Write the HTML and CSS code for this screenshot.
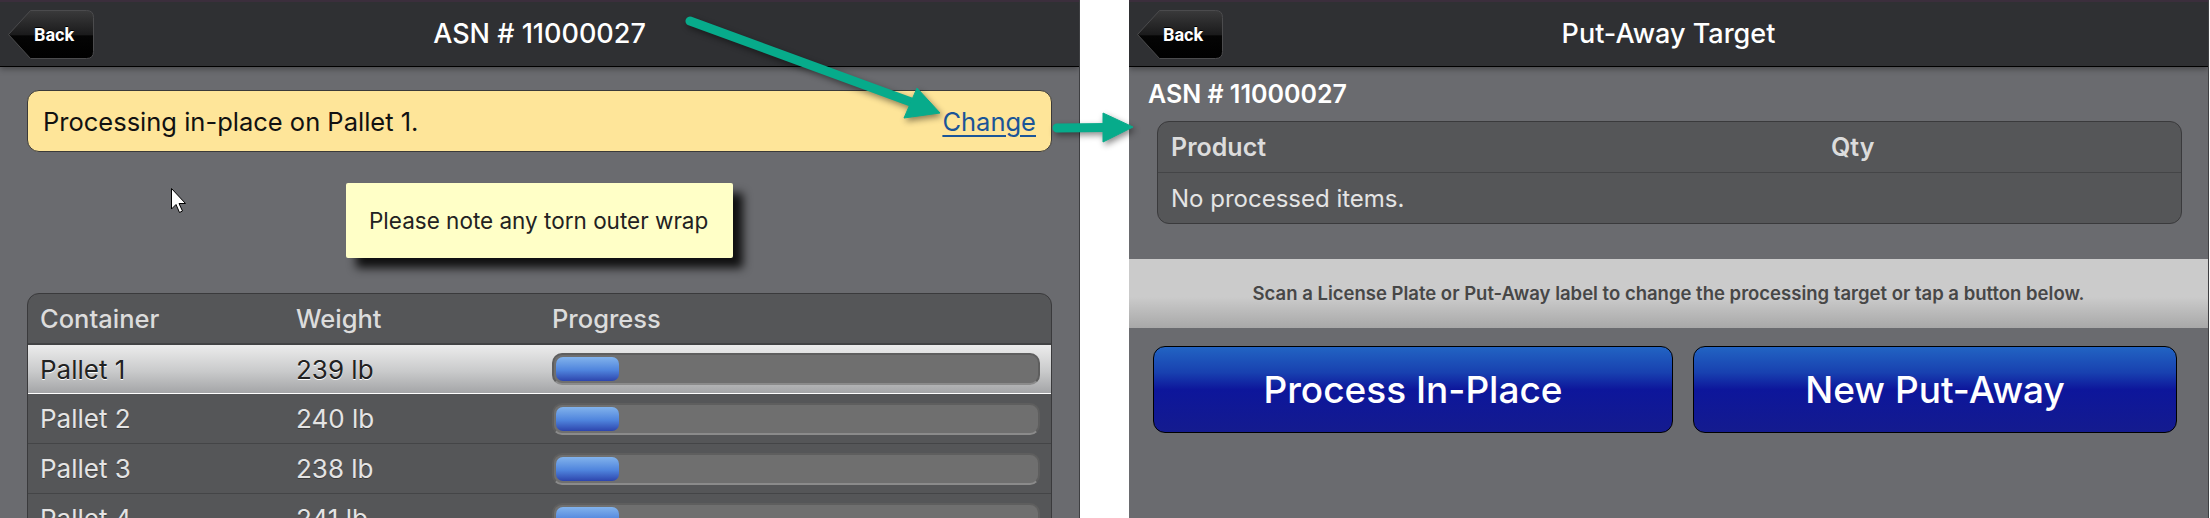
FILE: index.html
```html
<!DOCTYPE html>
<html lang="en">
<head>
  <meta charset="UTF-8">
  <title>ASN 11000027 - Put-Away</title>
  <link rel="stylesheet" href="styles.css">
</head>
<body>

  <!-- screen 1: receiving -->
  <div class="panel panel-left">
    <div class="header">
      <div class="back-btn">
        <svg class="back-shape" width="86" height="49" viewBox="0 0 86 49">
          <defs>
            <linearGradient id="backGrad" x1="0" y1="0" x2="0" y2="1">
              <stop offset="0" stop-color="#3a3a3b"/>
              <stop offset="0.5" stop-color="#1b1b1c"/>
              <stop offset="0.53" stop-color="#050505"/>
              <stop offset="1" stop-color="#000"/>
            </linearGradient>
          </defs>
          <path d="M22.5,0.5 H78.5 Q85.5,0.5 85.5,7.5 V41.5 Q85.5,48.5 78.5,48.5 H22.5 L0.5,24.5 Z" fill="url(#backGrad)" stroke="#4b4b4d"/>
        </svg>
        <span class="back-label">Back</span>
      </div>
      <div class="title">ASN # 11000027</div>
      <div></div>
    </div>

    <div class="content">
      <div class="message">
        <span>Processing in-place on Pallet 1.</span>
        <a href="#" class="change-link">Change</a>
      </div>

      <div class="note">Please note any torn outer wrap</div>

      <div class="grid-table">
        <div class="grid-head">
          <div>Container</div>
          <div>Weight</div>
          <div>Progress</div>
        </div>
        <div class="grid-row selected">
          <div>Pallet 1</div>
          <div>239 lb</div>
          <div class="track"><div class="fill"></div></div>
        </div>
        <div class="grid-row">
          <div>Pallet 2</div>
          <div>240 lb</div>
          <div class="track"><div class="fill"></div></div>
        </div>
        <div class="grid-row">
          <div>Pallet 3</div>
          <div>238 lb</div>
          <div class="track"><div class="fill"></div></div>
        </div>
        <div class="grid-row">
          <div>Pallet 4</div>
          <div>241 lb</div>
          <div class="track"><div class="fill"></div></div>
        </div>
      </div>
    </div>
  </div>

  <!-- screen 2: put-away target -->
  <div class="panel panel-right">
    <div class="header">
      <div class="back-btn">
        <svg class="back-shape" width="86" height="49" viewBox="0 0 86 49">
          <path d="M22.5,0.5 H78.5 Q85.5,0.5 85.5,7.5 V41.5 Q85.5,48.5 78.5,48.5 H22.5 L0.5,24.5 Z" fill="url(#backGrad)" stroke="#4b4b4d"/>
        </svg>
        <span class="back-label">Back</span>
      </div>
      <div class="title">Put-Away Target</div>
      <div></div>
    </div>

    <div class="asn-label">ASN # 11000027</div>

    <div class="items-table">
      <div class="items-head">
        <div>Product</div>
        <div>Qty</div>
      </div>
      <div class="items-empty">No processed items.</div>
    </div>

    <div class="scan-bar">Scan a License Plate or Put-Away label to change the processing target or tap a button below.</div>

    <div class="actions">
      <button class="big-btn">Process In-Place</button>
      <button class="big-btn">New Put-Away</button>
    </div>
  </div>

  <!-- annotations drawn over the screenshots -->
  <svg class="overlay" width="2210" height="518" viewBox="0 0 2210 518">
    <g class="arrows" fill="#07ab8b" stroke="#07ab8b">
      <line x1="690" y1="21" x2="911" y2="102" stroke-width="9" stroke-linecap="round"/>
      <polygon points="940,113 904,118 917,88" stroke-width="1" stroke-linejoin="round"/>
      <line x1="1057" y1="128" x2="1106" y2="127.5" stroke-width="9" stroke-linecap="round"/>
      <polygon points="1133,127 1103,113 1103,142" stroke-width="1" stroke-linejoin="round"/>
    </g>
    <path class="cursor" d="M171.5,188.5 V209 L176,204.5 L179.5,212.5 L182.5,211 L179,203.5 H185.5 Z" fill="#fff" stroke="#000" stroke-width="1"/>
  </svg>

</body>
</html>
```

FILE: styles.css
```css
body {
  margin: 0;
  width: 2210px;
  height: 518px;
  overflow: hidden;
  position: relative;
  display: flex;
  gap: 49px;
  background-color: #fff;
  font-family: Inter, 'Noto Sans', sans-serif;
}

.panel {
  width: 1080px;
  height: 518px;
  background-color: #6a6b6f;
  overflow: hidden;
  box-sizing: border-box;
  border-right: 1px solid #3e3f42;
}

.header {
  height: 64px;
  border-top: 2px solid #3b2e3c;
  border-bottom: 1px solid #000;
  background-color: #2f3033;
  display: grid;
  grid-template-columns: 1fr auto 1fr;
  align-items: center;
  padding: 0 8px;
  box-shadow: 0 2px 6px rgba(0, 0, 0, 0.35);
}

.back-btn {
  display: grid;
  width: 86px;
  height: 49px;
}

.back-shape,
.back-label {
  grid-area: 1 / 1;
}

.back-label {
  align-self: center;
  padding-left: 26px;
  color: #fff;
  font-family: Roboto, sans-serif;
  font-weight: 700;
  font-size: 18px;
  text-shadow: 0 -1px 0 #000;
}

.title {
  color: #fff;
  font-size: 27px;
  font-weight: 500;
  padding-bottom: 2px;
}

/* left screen */

.content {
  padding: 23px 27px 0 27px;
}

.message {
  height: 62px;
  box-sizing: border-box;
  border: 1px solid #3a3a3a;
  border-radius: 12px;
  background-color: #fee599;
  display: flex;
  justify-content: space-between;
  align-items: center;
  padding: 0 15px;
  font-size: 25.5px;
  color: #111;
}

.change-link {
  color: #1b5598;
  text-decoration: underline;
  text-underline-offset: 4px;
}

.note {
  width: 387px;
  height: 75px;
  box-sizing: border-box;
  margin: 31px 0 0 319px;
  padding-left: 23px;
  display: flex;
  align-items: center;
  background-color: #ffffc7;
  border-radius: 2px;
  box-shadow: 10px 10px 10px rgba(0, 0, 0, 0.85);
  font-size: 22.5px;
  color: #222;
}

.grid-table {
  margin-top: 35px;
  border: 1px solid #3a3a3c;
  border-radius: 12px;
  overflow: hidden;
  background-color: #555658;
}

.grid-head,
.grid-row {
  display: grid;
  grid-template-columns: 256px 256px 1fr;
  align-items: center;
  padding: 0 11px 0 12px;
}

.grid-head {
  height: 49px;
  border-bottom: 2px solid #424345;
  color: #dcdcdc;
  font-size: 25.5px;
  font-weight: 500;
}

.grid-row {
  height: 49px;
  border-bottom: 1px solid #444547;
  color: #e4e4e4;
  font-size: 26px;
  text-shadow: 0 1px 0 #3a3a3a;
}

.grid-row.selected {
  height: 48px;
  background: linear-gradient(#ececec, #c9cacb 55%, #a4a5a7);
  border-bottom-color: #fff;
  color: #222;
  text-shadow: 0 1px 0 #fff;
}

.track {
  height: 32px;
  box-sizing: border-box;
  border: 2px solid #5e5e5e;
  border-bottom-color: #8b8b8b;
  border-radius: 10px;
  background-color: #6f6f6f;
  padding: 2px;
}

.fill {
  width: 63px;
  height: 24px;
  border-radius: 7px;
  background: linear-gradient(#82b3ec, #4f84dd 55%, #2d45ad);
}

/* right screen */

.asn-label {
  line-height: 54px;
  padding-left: 19px;
  color: #fff;
  font-size: 25px;
  font-weight: 600;
}

.items-table {
  margin: 0 26px 0 28px;
  border: 1px solid #3a3a3c;
  border-radius: 12px;
  background-color: #555658;
  overflow: hidden;
}

.items-head {
  height: 50px;
  border-bottom: 1px solid #444547;
  display: grid;
  grid-template-columns: 660px 1fr;
  align-items: center;
  padding-left: 13px;
  color: #dcdcdc;
  font-size: 25px;
  font-weight: 600;
}

.items-empty {
  height: 50px;
  display: flex;
  align-items: center;
  padding-left: 13px;
  color: #e4e4e4;
  font-size: 24px;
}

.scan-bar {
  margin-top: 35px;
  height: 69px;
  display: flex;
  align-items: center;
  justify-content: center;
  padding-bottom: 2px;
  box-sizing: border-box;
  background: linear-gradient(#cbcbcb, #cbcbcb 55%, #a8a8a8);
  color: #474747;
  font-size: 18.5px;
  font-weight: 600;
}

.actions {
  margin-top: 18px;
  padding-left: 24px;
  display: grid;
  grid-template-columns: 520px 484px;
  gap: 20px;
}

.big-btn {
  height: 87px;
  border: 1px solid #000;
  border-radius: 12px;
  background: linear-gradient(#2264c3, #1841b0 30%, #0d169b 50%, #141b8f);
  color: #fff;
  font-family: Inter, sans-serif;
  font-size: 37px;
  font-weight: 500;
  cursor: pointer;
}

/* annotations */

.overlay {
  position: absolute;
  left: 0;
  top: 0;
  pointer-events: none;
}

.arrows {
  filter: drop-shadow(2px 3px 3px rgba(0, 0, 0, 0.45));
}
```
